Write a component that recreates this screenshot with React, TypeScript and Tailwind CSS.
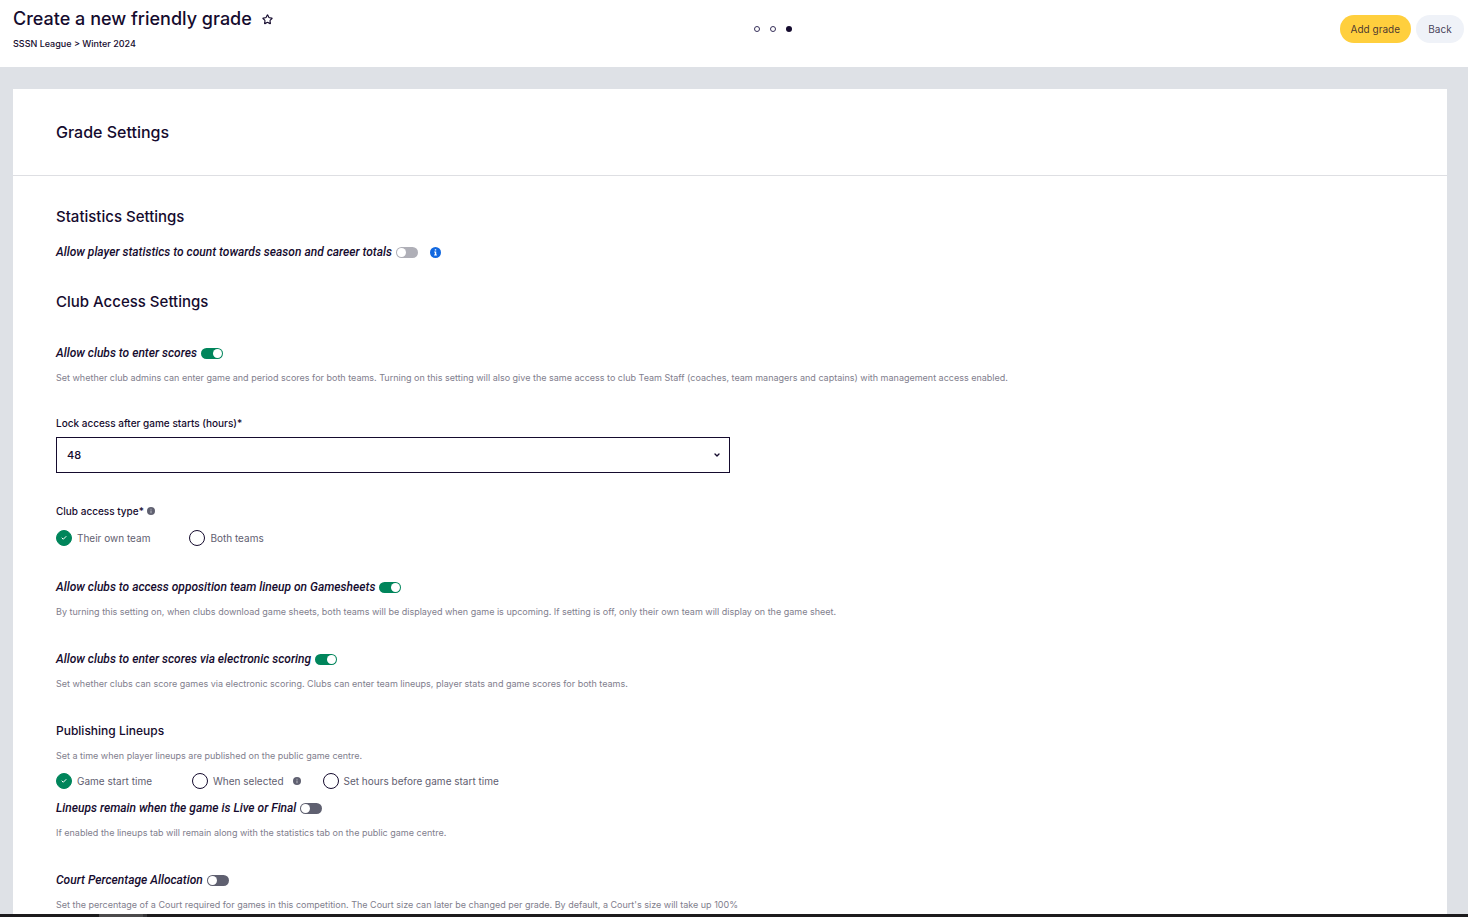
import { useState } from 'react';
import type { ReactNode } from 'react';
import { Check, ChevronDown, Star } from 'lucide-react';
import clsx from 'clsx';

interface ToggleRowProps {
  id: string;
  label: string;
  defaultChecked?: boolean;
  disabled?: boolean;
  description?: string;
  children?: ReactNode;
}

function ToggleRow({
  id,
  label,
  defaultChecked,
  disabled,
  description,
  children,
}: ToggleRowProps) {
  return (
    <div>
      <div className="flex h-4 items-center">
        <label
          htmlFor={id}
          className="font-['Roboto',sans-serif] text-[12px] font-medium leading-4 italic"
        >
          {label}
        </label>
        <input
          id={id}
          type="checkbox"
          role="switch"
          defaultChecked={defaultChecked}
          disabled={disabled}
          className="ml-1 flex h-[11px] w-[22px] shrink-0 appearance-none items-center rounded-full bg-[#5f6070] px-px before:h-[9px] before:w-[9px] before:rounded-full before:bg-white checked:justify-end checked:bg-[#00855b] disabled:bg-[#afafb7]"
        />
        {children}
      </div>
      {description ? <Description>{description}</Description> : null}
    </div>
  );
}

function Description({ children }: { children: ReactNode }) {
  return (
    <p className="mt-[9px] text-[9px] leading-4 text-[#7f7e8d]">{children}</p>
  );
}

function InfoIcon({ className }: { className?: string }) {
  return (
    <svg viewBox="0 0 12 12" className={clsx('shrink-0', className)} aria-hidden="true">
      <circle cx="6" cy="6" r="6" fill="currentColor" />
      <path
        d="M5.2 2.4h1.6v1.5H5.2zM4.6 4.9h2.2v3.2h.7v1.2H4.5V8.1h.8V6h-.7z"
        fill="white"
      />
    </svg>
  );
}

function InfoDot() {
  return (
    <svg viewBox="0 0 8 8" className="h-2 w-2 shrink-0 text-[#5f6070]" aria-hidden="true">
      <circle cx="4" cy="4" r="4" fill="currentColor" />
      <path d="M3.5 1.7h1v1h-1zM3.5 3.4h1v2.9h-1z" fill="#b9b9c2" />
    </svg>
  );
}

interface RadioProps {
  name: string;
  label: string;
  defaultChecked?: boolean;
}

function Radio({ name, label, defaultChecked }: RadioProps) {
  return (
    <label className="flex items-center gap-[5px] text-[10px] leading-4 text-[#5f6070]">
      <span className="relative h-4 w-4 shrink-0">
        <input
          type="radio"
          name={name}
          defaultChecked={defaultChecked}
          className="peer block h-4 w-4 appearance-none rounded-full border border-[#150b2e] bg-white checked:border-[#00855b] checked:bg-[#00855b]"
        />
        <Check
          className="pointer-events-none absolute inset-[5px] hidden h-1.5 w-1.5 text-white peer-checked:block"
          strokeWidth={4}
        />
      </span>
      {label}
    </label>
  );
}

function Header() {
  return (
    <header className="flex items-start bg-white pt-[7px] pr-1 pb-[15px] pl-[13px]">
      <div className="w-[51%]">
        <div className="flex items-center gap-[10px]">
          <h1 className="text-[18px] font-medium leading-6">
            Create a new friendly grade
          </h1>
          <button type="button" aria-label="Favourite">
            <Star className="h-[11px] w-[11px]" strokeWidth={2.5} />
          </button>
        </div>
        <p className="mt-[5px] text-[9px] font-medium leading-4">
          <a href="#league">SSSN League</a> &gt; <a href="#season">Winter 2024</a>
        </p>
      </div>
      <div className="mt-2 flex h-7 items-center gap-[10px] px-px">
        <span className="h-1.5 w-1.5 rounded-full border border-[#37305a]" />
        <span className="h-1.5 w-1.5 rounded-full border border-[#37305a]" />
        <span className="h-1.5 w-1.5 rounded-full bg-[#150b2e]" />
      </div>
      <div className="mt-2 ml-auto flex gap-[5px]">
        <button
          type="button"
          className="h-7 rounded-full bg-[#ffcf3d] px-[11px] text-[10px] text-[#150b2e]/80"
        >
          Add grade
        </button>
        <button
          type="button"
          className="h-7 min-w-12 rounded-full bg-[#eff2f8] px-3 text-[10px] text-[#150b2e]/80"
        >
          Back
        </button>
      </div>
    </header>
  );
}

export default function App() {
  const [hours, setHours] = useState('48');

  return (
    <div className="flex min-h-screen flex-col bg-[#dee1e6] font-['Inter',sans-serif] text-[#150b2e]">
      <Header />
      <main className="mt-[22px] mr-[21px] ml-[13px] flex-1 bg-white">
        <div className="border-b border-[#dedfe3] px-[43px] py-8">
          <h2 className="text-[16px] font-medium leading-[22px]">Grade Settings</h2>
        </div>
        <div className="px-[43px] pt-[31px]">
          <h3 className="text-[15px] font-medium leading-5">Statistics Settings</h3>
          <div className="mt-[17px]">
            <ToggleRow
              id="player-stats"
              label="Allow player statistics to count towards season and career totals"
              disabled
            >
              <InfoIcon className="ml-3 h-[11px] w-[11px] text-[#1268e0]" />
            </ToggleRow>
          </div>

          <h3 className="mt-8 text-[15px] font-medium leading-5">
            Club Access Settings
          </h3>
          <div className="mt-[33px]">
            <ToggleRow
              id="enter-scores"
              label="Allow clubs to enter scores"
              defaultChecked
              description="Set whether club admins can enter game and period scores for both teams. Turning on this setting will also give the same access to club Team Staff (coaches, team managers and captains) with management access enabled."
            />
          </div>

          <div className="mt-[29px]">
            <label htmlFor="lock-hours" className="block text-[10px] font-medium leading-4">
              Lock access after game starts (hours)*
            </label>
            <div className="relative mt-1.5 w-1/2">
              <select
                id="lock-hours"
                value={hours}
                onChange={(e) => setHours(e.target.value)}
                className="block h-9 w-full appearance-none border border-[#150b2e] bg-white px-[10px] text-[11px] font-medium"
              >
                <option value="24">24</option>
                <option value="48">48</option>
                <option value="72">72</option>
              </select>
              <ChevronDown
                className="pointer-events-none absolute top-[14px] right-[9px] h-2 w-2"
                strokeWidth={4}
              />
            </div>
          </div>

          <fieldset className="mt-[30px]">
            <legend className="flex items-center gap-[3px] text-[10px] font-medium leading-4">
              Club access type*
              <InfoDot />
            </legend>
            <div className="mt-[11px] flex gap-[39px]">
              <Radio name="access-type" label="Their own team" defaultChecked />
              <Radio name="access-type" label="Both teams" />
            </div>
          </fieldset>

          <div className="mt-[33px] space-y-[31px]">
            <ToggleRow
              id="opposition-lineup"
              label="Allow clubs to access opposition team lineup on Gamesheets"
              defaultChecked
              description="By turning this setting on, when clubs download game sheets, both teams will be displayed when game is upcoming. If setting is off, only their own team will display on the game sheet."
            />
            <ToggleRow
              id="electronic-scoring"
              label="Allow clubs to enter scores via electronic scoring"
              defaultChecked
              description="Set whether clubs can score games via electronic scoring. Clubs can enter team lineups, player stats and game scores for both teams."
            />
            <div>
              <h4 className="text-[12px] font-medium leading-4">Publishing Lineups</h4>
              <Description>
                Set a time when player lineups are published on the public game centre.
              </Description>
              <div className="mt-[9px] mb-[11px] flex items-center">
                <Radio name="publish" label="Game start time" defaultChecked />
                <div className="mr-[22px] ml-10 flex items-center gap-[9px]">
                  <Radio name="publish" label="When selected" />
                  <InfoDot />
                </div>
                <Radio name="publish" label="Set hours before game start time" />
              </div>
              <ToggleRow
                id="lineups-remain"
                label="Lineups remain when the game is Live or Final"
                description="If enabled the lineups tab will remain along with the statistics tab on the public game centre."
              />
            </div>
            <ToggleRow
              id="court-percentage"
              label="Court Percentage Allocation"
              description="Set the percentage of a Court required for games in this competition. The Court size can later be changed per grade. By default, a Court's size will take up 100%"
            />
          </div>
        </div>
      </main>
      <footer className="sticky bottom-0 h-[3px] bg-[#1c1b1d] pl-[99px]">
        <div className="h-full w-12 border-r-4 border-[#353436] bg-[#4b4a4b]" />
      </footer>
    </div>
  );
}
